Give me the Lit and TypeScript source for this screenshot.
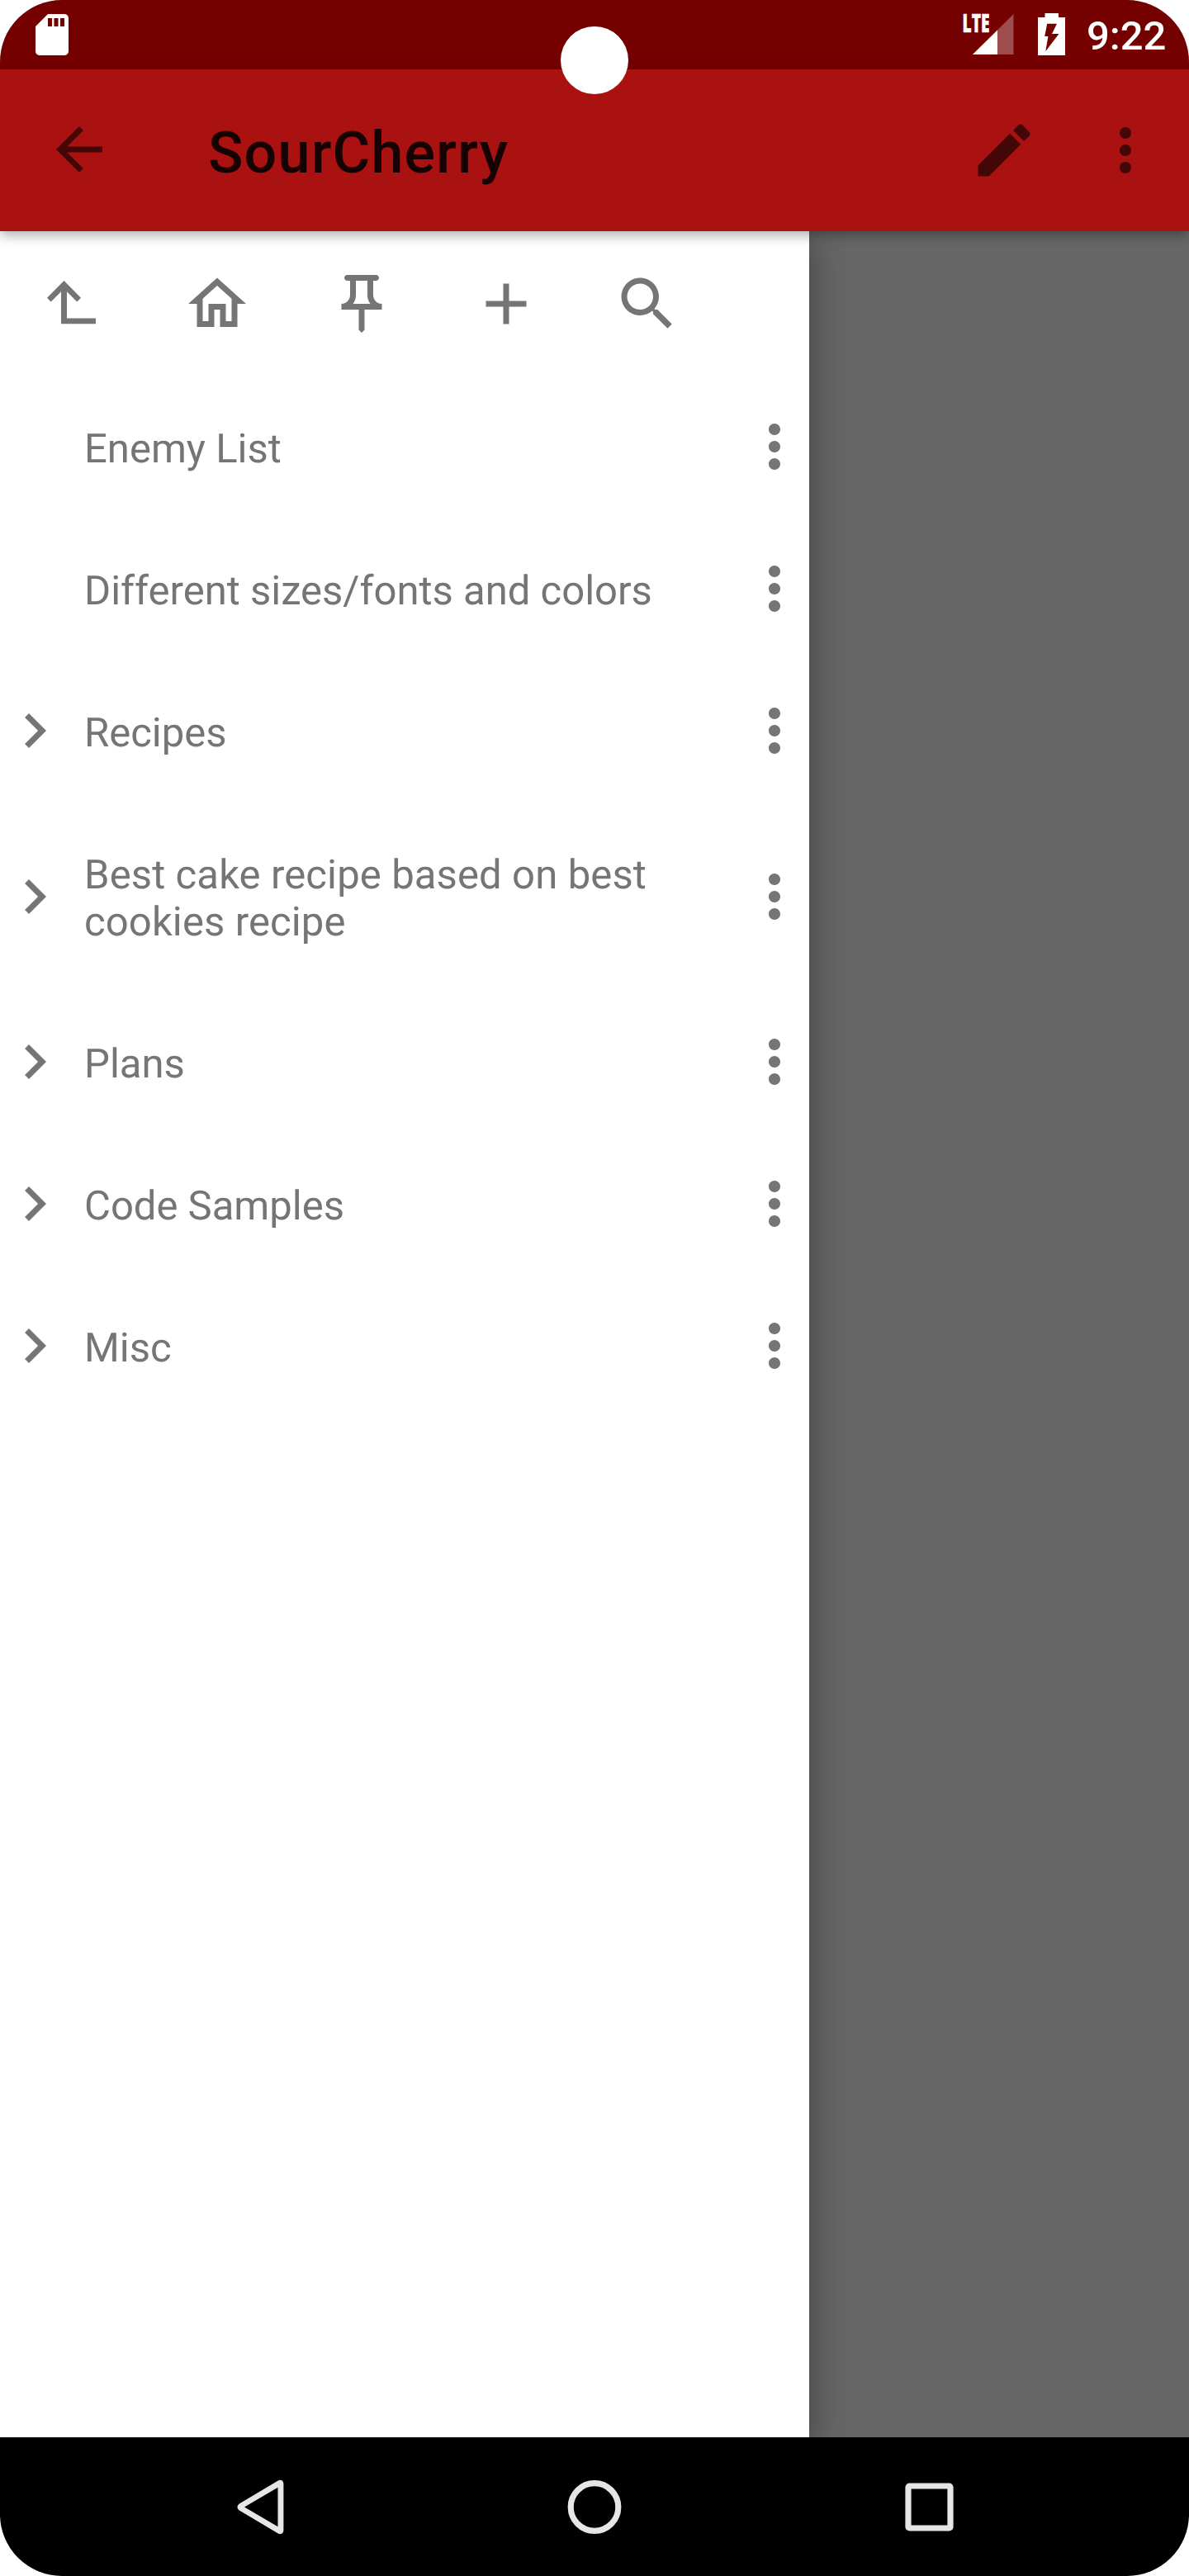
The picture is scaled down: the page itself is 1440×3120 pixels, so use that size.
import { LitElement, html, svg, css } from "lit";
import { customElement, property } from "lit/decorators.js";

const ICONS: Record<string, string> = {
  sd: "M18 2h-8L4 8v12c0 1.100.9 2 2 2h12c1.100 0 2-.9 2-2V4c0-1.100-.9-2-2-2zM12 8h-2V4h2zM15 8h-2V4h2zM18 8h-2V4h2z",
  back: "M20 11H7.800l5.600-5.600L12 4l-8 8 8 8 1.400-1.400L7.800 13H20z",
  edit: "M3 17.250V21h3.750L17.810 9.940l-3.750-3.750zM20.710 7.040c.39-.39.39-1.020 0-1.410l-2.340-2.340c-.39-.39-1.020-.39-1.410 0l-1.830 1.830 3.750 3.750z",
  more: "M12 8c1.100 0 2-.9 2-2s-.9-2-2-2-2 .9-2 2 .9 2 2 2zm0 2c-1.100 0-2 .9-2 2s.9 2 2 2 2-.9 2-2-.9-2-2-2zm0 6c-1.100 0-2 .9-2 2s.9 2 2 2 2-.9 2-2-.9-2-2-2z",
  up: "M9 4l-5.860 5.930 1.340 1.380L8 7.810V18.950h12V17H10V7.810l3.520 3.500 1.340-1.380z",
  home: "M12 5.690l5 4.500V18h-2v-6H9v6H7v-7.810zM12 3L2 12h3v8h6v-6h2v6h6v-8h3z",
  pin: "M14 4v5c0 1.120.37 2.160 1 3H9c.65-.86 1-1.900 1-3V4zM17 2H7c-.55 0-1 .45-1 1s.45 1 1 1h1v5c0 1.660-1.340 3-3 3v2h6v7l1 1 1-1v-7h6v-2c-1.660 0-3-1.340-3-3V4h1c.55 0 1-.45 1-1s-.45-1-1-1z",
  plus: "M19 13h-6v6h-2v-6H5v-2h6V5h2v6h6z",
  search:
    "M15.500 14h-.79l-.28-.27C15.410 12.590 16 11.110 16 9.500 16 5.910 13.090 3 9.500 3S3 5.910 3 9.500 5.910 16 9.500 16c1.610 0 3.090-.59 4.230-1.570l.27.28v.79l5 4.990L20.490 19zM9.500 14C7.010 14 5 11.990 5 9.500S7.010 5 9.500 5 14 7.010 14 9.500 11.990 14 9.500 14z",
  chevron: "M10 6L8.590 7.410 13.170 12l-4.580 4.590L10 18l6-6z",
};

@customElement("md-icon")
class MdIcon extends LitElement {
  @property() name = "";
  static styles = css`
    :host { display: block; flex: none; width: 84px; height: 84px; }
    svg { display: block; width: 100%; height: 100%; fill: currentColor; fill-rule: evenodd; }
  `;
  render() {
    return html`<svg viewBox="0 0 24 24">${svg`<path d=${ICONS[this.name] ?? ""}></path>`}</svg>`;
  }
}

@customElement("status-bar")
class StatusBar extends LitElement {
  static styles = css`
    :host { display: flex; box-sizing: border-box; height: 84px; padding: 0 29px 0 33px; background: #740000; color: #fff; }
    .sd { width: 60px; height: 60px; margin-top: 12px; }
    .signal { display: block; margin-left: auto; width: 66px; height: 84px; }
    .battery { display: block; margin-left: 24px; width: 40px; height: 84px; }
    .lte { font: 800 29.500px "Open Sans", sans-serif; fill: #fff; stroke: #fff; stroke-width: 0.500; }
    .time { margin-left: 20px; width: 95px; padding-top: 15px; font-size: 49px; line-height: 58px; font-weight: 500; white-space: nowrap; }
  `;
  render() {
    return html`
      <md-icon class="sd" name="sd"></md-icon>
      <svg class="signal" viewBox="0 0 66 84">
        <text class="lte" x="-0.500" y="39" textLength="33" lengthAdjust="spacingAndGlyphs">LTE</text>
        <path d="M61.500 17V66H12z" fill="#fff" opacity=".3"></path>
        <path d="M42 36.500V66H12z" fill="#fff"></path>
      </svg>
      <svg class="battery" viewBox="0 0 40 84">
        <path fill="#fff" fill-rule="evenodd"
          d="M9.500 16h16.500v5h8v46h-33v-46h8.500zM12.200 28.700L9.200 44h4.200l-3.100 18.200L26.500 41h-8.500L24 28.700z"></path>
      </svg>
      <div class="time">9:22</div>
    `;
  }
}

@customElement("app-bar")
class AppBar extends LitElement {
  static styles = css`
    :host {
      display: flex; align-items: center; box-sizing: border-box; height: 196px; padding: 0 35px 0 54px;
      background: #aa1111; color: #440707; position: relative; z-index: 2;
      box-shadow: 0 5px 14px rgba(0, 0, 0, 0.32);
    }
    .back { margin-top: -3px; }
    .title { margin-left: 114px; padding-top: 6px; flex: 1; font-size: 70px; line-height: 82px; font-weight: 500; letter-spacing: 1.200px; color: #160202; }
    .more { margin-left: 63px; }
  `;
  render() {
    return html`
      <md-icon class="back" name="back"></md-icon>
      <div class="title">SourCherry</div>
      <md-icon name="edit"></md-icon>
      <md-icon class="more" name="more"></md-icon>
    `;
  }
}

interface TreeNode { label: string; parent?: boolean; long?: boolean }

const NODES: TreeNode[] = [
  { label: "Enemy List" },
  { label: "Different sizes/fonts and colors" },
  { label: "Recipes", parent: true },
  { label: "Best cake recipe based on best cookies recipe", parent: true, long: true },
  { label: "Plans", parent: true },
  { label: "Code Samples", parent: true },
  { label: "Misc", parent: true },
];

@customElement("node-drawer")
class NodeDrawer extends LitElement {
  static styles = css`
    :host { display: block; width: 980px; background: #fff; color: #757575; box-shadow: 4px 12px 38px rgba(0, 0, 0, 0.32); }
    .tools { display: flex; gap: 91px; box-sizing: border-box; height: 175px; padding: 46px 0 0 46px; }
    .search { margin-left: -4px; }
    .row { display: flex; align-items: center; box-sizing: border-box; height: 172px; }
    .row.tall { height: 229px; }
    .slot { width: 84px; flex: none; }
    .label { flex: 1; margin-left: 18px; padding-top: 5px; font-size: 49px; line-height: 57px; text-rendering: geometricPrecision; }
    .tall .label { letter-spacing: 0.120px; }
  `;
  render() {
    return html`
      <div class="tools">
        ${["up", "home", "pin", "plus", "search"].map((n) => html`<md-icon class=${n} name=${n}></md-icon>`)}
      </div>
      ${NODES.map(
        (n) => html`
          <div class="row ${n.long ? "tall" : ""}">
            <div class="slot">${n.parent ? html`<md-icon name="chevron"></md-icon>` : null}</div>
            <div class="label">${n.label}</div>
            <md-icon name="more"></md-icon>
          </div>
        `
      )}
    `;
  }
}

@customElement("nav-bar")
class NavBar extends LitElement {
  static styles = css`
    :host { display: flex; justify-content: center; align-items: center; gap: 307px; height: 168px; background: #000; position: relative; z-index: 3; }
    svg { display: block; width: 98px; height: 98px; fill: none; stroke: #e6e6e6; stroke-width: 7.200; }
    .solid { fill: #e6e6e6; stroke: none; }
  `;
  render() {
    return html`
      <svg viewBox="0 0 98 98">
        <path class="solid" fill-rule="evenodd"
          d="M24.200 45.300L70.800 17.600C74 15.800 77.400 17.400 77.400 21.500V77.500C77.400 81.600 74 83.200 70.800 81.400L24.200 53.700C20.600 51.400 20.600 47.600 24.200 45.300zM30 49.500L70.500 73.200V25.800z"></path>
      </svg>
      <svg viewBox="0 0 98 98"><circle cx="49" cy="49.500" r="28.800"></circle></svg>
      <svg viewBox="0 0 98 98"><rect x="24" y="24" width="51" height="51" rx="1.500"></rect></svg>
    `;
  }
}

@customElement("app-root")
class AppRoot extends LitElement {
  static styles = css`
    :host { display: block; width: 1440px; height: 3120px; background: #fff; font-family: Roboto, sans-serif; }
    .screen { display: flex; flex-direction: column; height: 3120px; position: relative; overflow: hidden; border-radius: 75px; }
    .content { flex: 1; display: flex; background: #666; }
    .camera { position: absolute; z-index: 4; left: 679px; top: 32px; width: 82px; height: 82px; border-radius: 50%; background: #fff; }
  `;
  render() {
    return html`
      <div class="screen">
        <status-bar></status-bar>
        <app-bar></app-bar>
        <div class="content"><node-drawer></node-drawer></div>
        <nav-bar></nav-bar>
        <div class="camera"></div>
      </div>
    `;
  }
}
